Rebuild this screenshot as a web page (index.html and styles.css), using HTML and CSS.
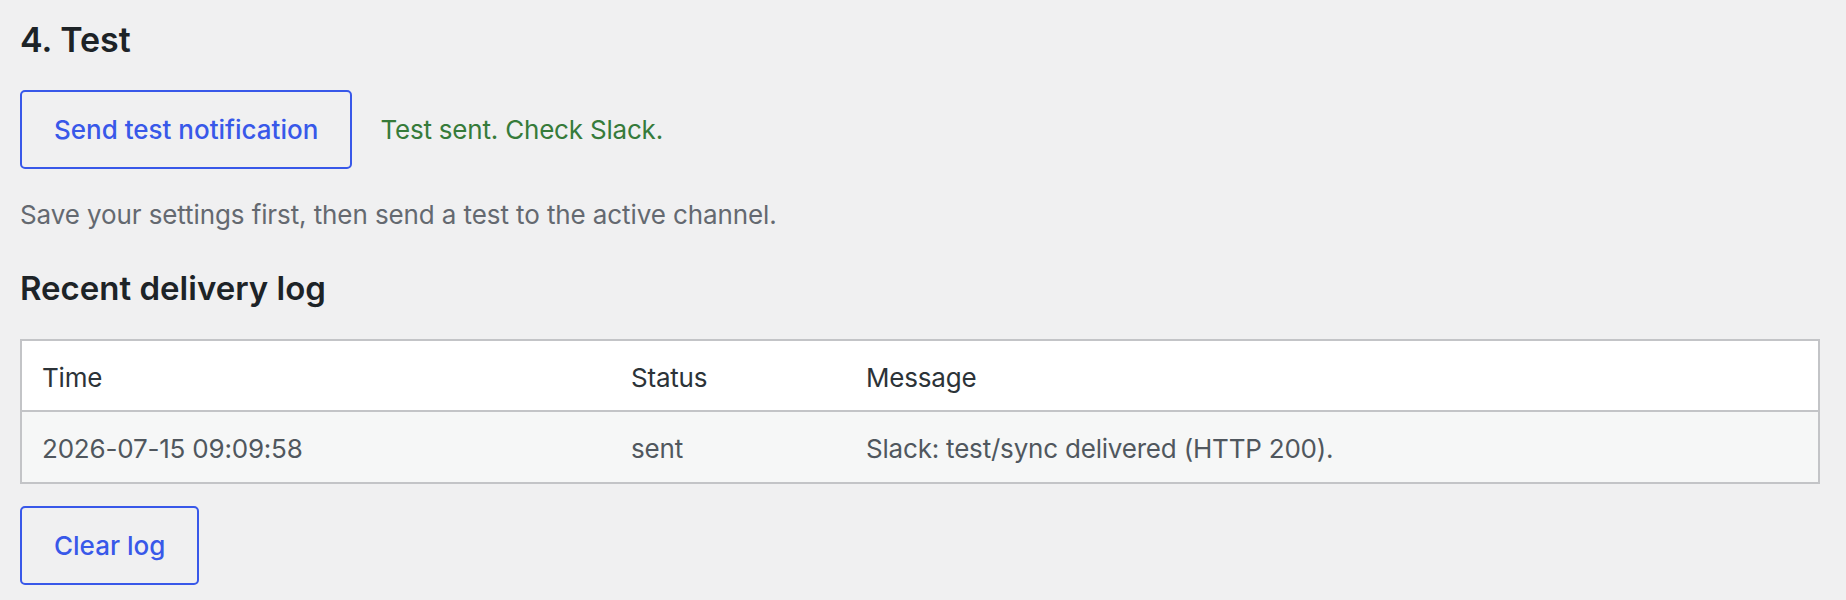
FILE: index.html
```html
<!DOCTYPE html>
<html lang="en">
<head>
    <meta charset="UTF-8">
    <meta name="viewport" content="width=device-width, initial-scale=1.0">
    <title>Notifications – Test</title>
    <link rel="stylesheet" href="styles.css">
</head>
<body>
    <div class="wrap">
        <h2 class="section-title">4. Test</h2>

        <div class="test-row">
            <button class="button" type="button">Send test notification</button>
            <span class="test-result">Test sent. Check Slack.</span>
        </div>

        <p class="description">Save your settings first, then send a test to the active channel.</p>

        <h3 class="log-title">Recent delivery log</h3>

        <table class="log-table">
            <thead>
                <tr>
                    <th class="col-time">Time</th>
                    <th class="col-status">Status</th>
                    <th>Message</th>
                </tr>
            </thead>
            <tbody>
                <tr>
                    <td>2026-07-15 09:09:58</td>
                    <td>sent</td>
                    <td>Slack: test/sync delivered (HTTP 200).</td>
                </tr>
            </tbody>
        </table>

        <button class="button" type="button">Clear log</button>
    </div>
</body>
</html>
```

FILE: styles.css
```css
body {
    margin: 0;
    padding: 0;
    background-color: #f0f0f1;
    font-family: 'Inter', 'Noto Sans', sans-serif;
    color: #1d2327;
}

.wrap {
    padding: 18px 26px 0 20px;
}

.section-title {
    margin: 0;
    font-size: 34px;
    line-height: 44px;
    font-weight: 600;
    color: #1d2327;
}

.test-row {
    display: flex;
    align-items: center;
    margin-top: 28px;
}

.button {
    font-family: inherit;
    font-size: 26px;
    font-weight: 500;
    line-height: 75px;
    padding: 0 32px;
    background-color: #f0f0f1;
    color: #3858e9;
    border: 2px solid #3858e9;
    border-radius: 5px;
    cursor: pointer;
}

.test-result {
    margin-left: 28px;
    font-size: 26px;
    letter-spacing: -0.2px;
    color: #367b3a;
}

.description {
    margin: 28px 0 0;
    font-size: 26px;
    line-height: 36px;
    letter-spacing: -0.1px;
    color: #646970;
}

.log-title {
    margin: 33px 0 0;
    font-size: 33px;
    line-height: 44px;
    font-weight: 600;
    color: #1d2327;
}

.log-table {
    width: 100%;
    margin-top: 29px;
    border-collapse: collapse;
    table-layout: fixed;
    border: 2px solid #c3c4c7;
    font-size: 26px;
    line-height: 37px;
    letter-spacing: -0.2px;
}

.log-table th {
    text-align: left;
    font-weight: 400;
    padding: 18px 20px 14px;
    background-color: #fff;
    color: #2c3338;
    border-bottom: 2px solid #c3c4c7;
}

.log-table td {
    padding: 18px 20px 15px;
    background-color: #f6f7f7;
    color: #50575e;
}

.col-time {
    width: 549px;
}

.col-status {
    width: 195px;
}

.log-table + .button {
    margin-top: 22px;
}
```
